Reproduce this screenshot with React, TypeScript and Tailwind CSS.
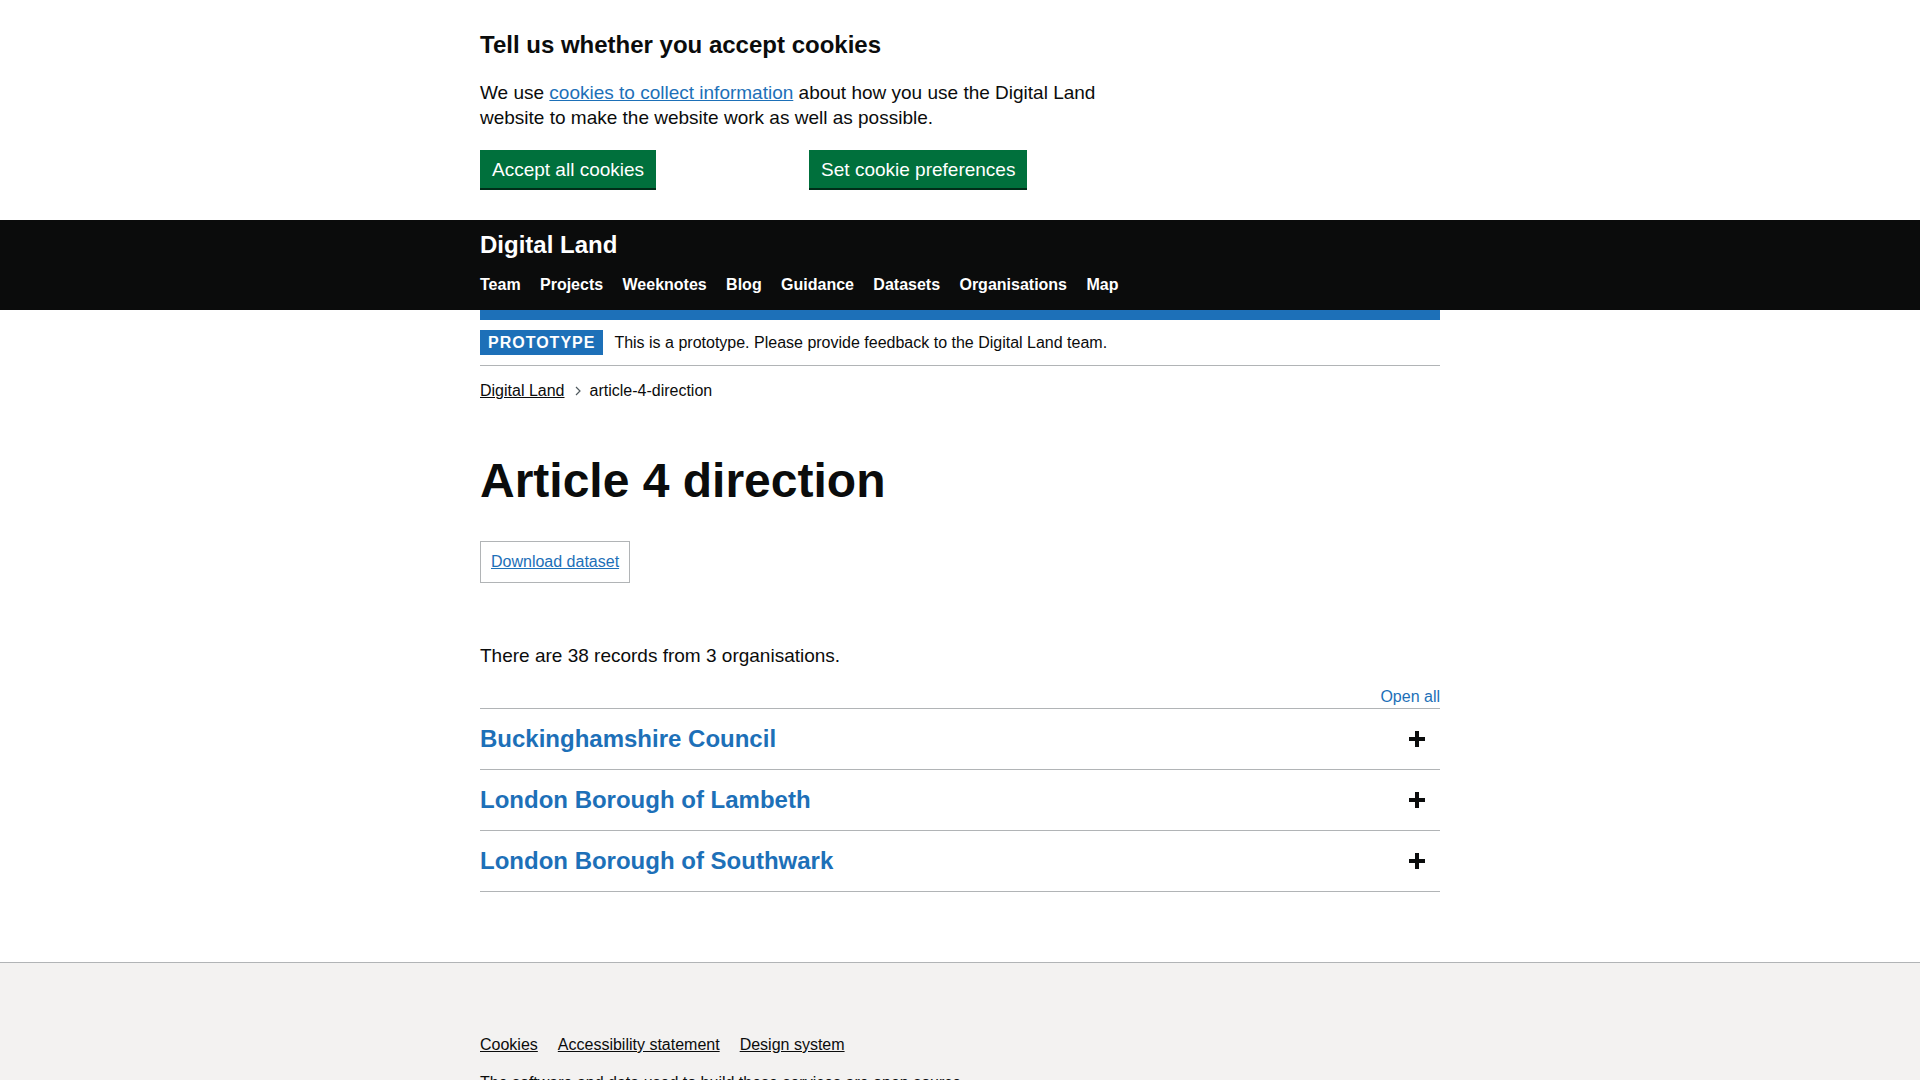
const font = { fontFamily: '"Liberation Sans", Arial, sans-serif' };

const navItems = ["Team", "Projects", "Weeknotes", "Blog", "Guidance", "Datasets", "Organisations", "Map"];
const orgs = ["Buckinghamshire Council", "London Borough of Lambeth", "London Borough of Southwark"];

function Plus() {
  return (
    <svg width="16" height="16" viewBox="0 0 16 16" aria-hidden="true">
      <rect x="6" y="0" width="4" height="16" fill="#0b0c0c" />
      <rect x="0" y="6" width="16" height="4" fill="#0b0c0c" />
    </svg>
  );
}

function CookieBanner() {
  return (
    <div className="bg-white">
      <div className="mx-auto w-[960px] pt-[30px] pb-[32px]">
        <h2 className="text-[24px] leading-[30px] font-bold text-[#0b0c0c]">Tell us whether you accept cookies</h2>
        <p className="mt-[20px] w-[630px] text-[19px] leading-[25px] text-[#0b0c0c]">
          We use{" "}
          <a href="#" className="text-[#1d70b8] underline">
            cookies to collect information
          </a>{" "}
          about how you use the Digital Land website to make the website work as well as possible.
        </p>
        <div className="mt-[20px] flex">
          <button className="bg-[#00703c] px-[12px] pt-[8px] pb-[7px] text-[19px] leading-[23px] text-white shadow-[0_2px_0_#002d18]">
            Accept all cookies
          </button>
          <button className="ml-[153px] bg-[#00703c] px-[12px] pt-[8px] pb-[7px] text-[19px] leading-[23px] text-white shadow-[0_2px_0_#002d18]">
            Set cookie preferences
          </button>
        </div>
      </div>
    </div>
  );
}

function Header() {
  return (
    <header className="bg-[#0b0c0c] h-[90px]">
      <div className="mx-auto w-[960px] pt-[10px]">
        <div className="text-[24px] leading-[30px] font-bold text-white">Digital Land</div>
        <nav className="mt-[15px] flex gap-[19.4px]">
          {navItems.map((n) => (
            <a key={n} href="#" className="text-[16px] leading-[20px] font-bold text-white">
              {n}
            </a>
          ))}
        </nav>
      </div>
    </header>
  );
}

export default function App() {
  return (
    <div style={font} className="min-h-screen bg-white text-[#0b0c0c]">
      <CookieBanner />
      <Header />
      <main className="mx-auto w-[960px]">
        <div className="h-[10px] bg-[#1d70b8]"></div>
        <div className="flex items-center border-b border-[#b1b4b6] pt-[10px] pb-[10px]">
          <strong className="bg-[#1d70b8] px-[8px] pt-[5px] pb-[4px] text-[16px] leading-[16px] font-bold tracking-[1px] text-white">
            PROTOTYPE
          </strong>
          <span className="ml-[11px] text-[16px] leading-[20px]">
            This is a prototype. Please provide feedback to the Digital Land team.
          </span>
        </div>
        <div className="mt-[15px] flex items-center text-[16px] leading-[20px]">
          <a href="#" className="underline text-[#0b0c0c]">Digital Land</a>
          <svg width="7" height="10" viewBox="0 0 7 10" className="ml-[10px] mr-[8px]" aria-hidden="true">
            <path d="M1 1l4 4-4 4" fill="none" stroke="#505a5f" strokeWidth="1.2" />
          </svg>
          <span>article-4-direction</span>
        </div>
        <h1 className="mt-[55px] text-[48px] leading-[50px] font-bold">Article 4 direction</h1>
        <div className="mt-[35px] flex">
          <div className="border border-[#b1b4b6] px-[10px] h-[42px] flex items-center">
            <a href="#" className="text-[16px] leading-[20px] text-[#1d70b8] underline">Download dataset</a>
          </div>
        </div>
        <p className="mt-[60px] text-[19px] leading-[25px]">There are 38 records from 3 organisations.</p>
        <div className="mt-[19px] flex justify-end">
          <button className="text-[16px] leading-[20px] text-[#1d70b8]">Open all</button>
        </div>
        <div className="mt-[1px] border-t border-[#b1b4b6]">
          {orgs.map((o) => (
            <div key={o} className="flex h-[61px] items-center justify-between border-b border-[#b1b4b6]">
              <span className="text-[24px] leading-[30px] font-bold text-[#1d70b8]">{o}</span>
              <span className="mr-[15px]">
                <Plus />
              </span>
            </div>
          ))}
        </div>
      </main>
      <footer className="mt-[70px] border-t border-[#b1b4b6] bg-[#f3f2f1] pb-[40px]">
        <div className="mx-auto w-[960px] pt-[72px]">
          <div className="flex gap-[20px] text-[16px] leading-[20px]">
            <a href="#" className="underline text-[#0b0c0c]">Cookies</a>
            <a href="#" className="underline text-[#0b0c0c]">Accessibility statement</a>
            <a href="#" className="underline text-[#0b0c0c]">Design system</a>
          </div>
          <p className="mt-[18px] text-[16px] leading-[20px]">
            The software and data used to build these services are open source.
          </p>
        </div>
      </footer>
    </div>
  );
}
